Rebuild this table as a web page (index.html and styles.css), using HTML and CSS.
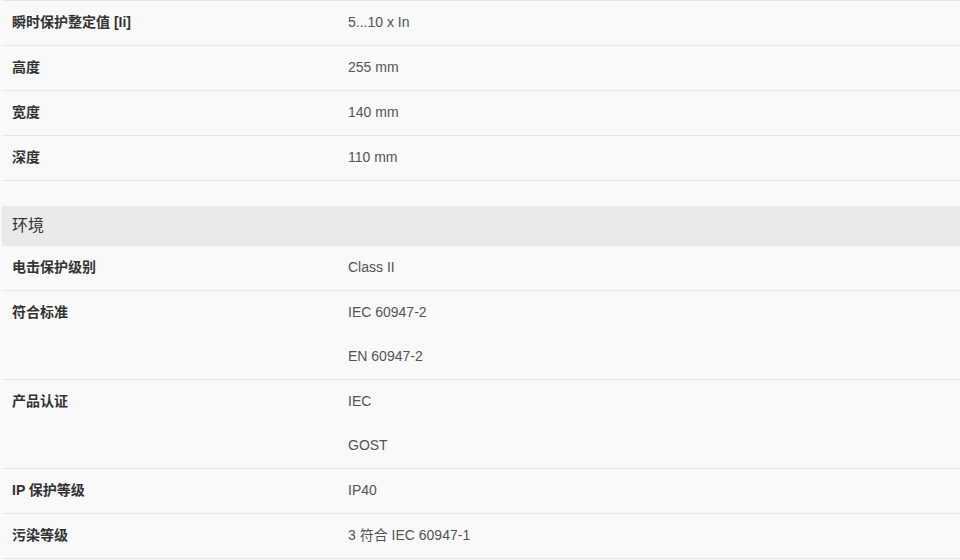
FILE: index.html
```html
<!DOCTYPE html>
<html lang="zh-CN">
<head>
<meta charset="utf-8">
<title>规格</title>
<link rel="stylesheet" href="styles.css">
</head>
<body>
<div class="specs">
  <div class="group">
    <div class="row"><div class="label">瞬时保护整定值 [Ii]</div><div class="values"><div class="val">5...10 x In</div></div></div>
    <div class="row"><div class="label">高度</div><div class="values"><div class="val">255 mm</div></div></div>
    <div class="row"><div class="label">宽度</div><div class="values"><div class="val">140 mm</div></div></div>
    <div class="row"><div class="label">深度</div><div class="values"><div class="val">110 mm</div></div></div>
  </div>
  <div class="group">
    <div class="group-title">环境</div>
    <div class="row"><div class="label">电击保护级别</div><div class="values"><div class="val">Class II</div></div></div>
    <div class="row"><div class="label">符合标准</div><div class="values"><div class="val">IEC 60947-2</div><div class="val">EN 60947-2</div></div></div>
    <div class="row"><div class="label">产品认证</div><div class="values"><div class="val">IEC</div><div class="val">GOST</div></div></div>
    <div class="row"><div class="label">IP 保护等级</div><div class="values"><div class="val">IP40</div></div></div>
    <div class="row"><div class="label">污染等级</div><div class="values"><div class="val">3 符合 IEC 60947-1</div></div></div>
  </div>
</div>
</body>
</html>
```
FILE: styles.css
```css
html, body {
  margin: 0;
  padding: 0;
  background: #f9f9f9;
}
body {
  font-family: "Liberation Sans", Arial, "Noto Sans CJK SC", sans-serif;
  font-size: 14px;
  color: #333;
}
.specs {
  margin-left: 2px;
  border-top: 1px solid #e6e6e6;
  display: flex;
  flex-direction: column;
  gap: 25px;
}
.group-title {
  height: 40px;
  line-height: 40px;
  padding-left: 10px;
  background: #e9e9e9;
  font-size: 16px;
  color: #333;
}
.row {
  display: grid;
  grid-template-columns: 336px 1fr;
  border-bottom: 1px solid #e6e6e6;
}
.label {
  padding: 13px 10px 15px;
  line-height: 16px;
  font-weight: bold;
  color: #333;
}
.val {
  padding: 13px 10px 15px;
  line-height: 16px;
  color: #555;
}
```
